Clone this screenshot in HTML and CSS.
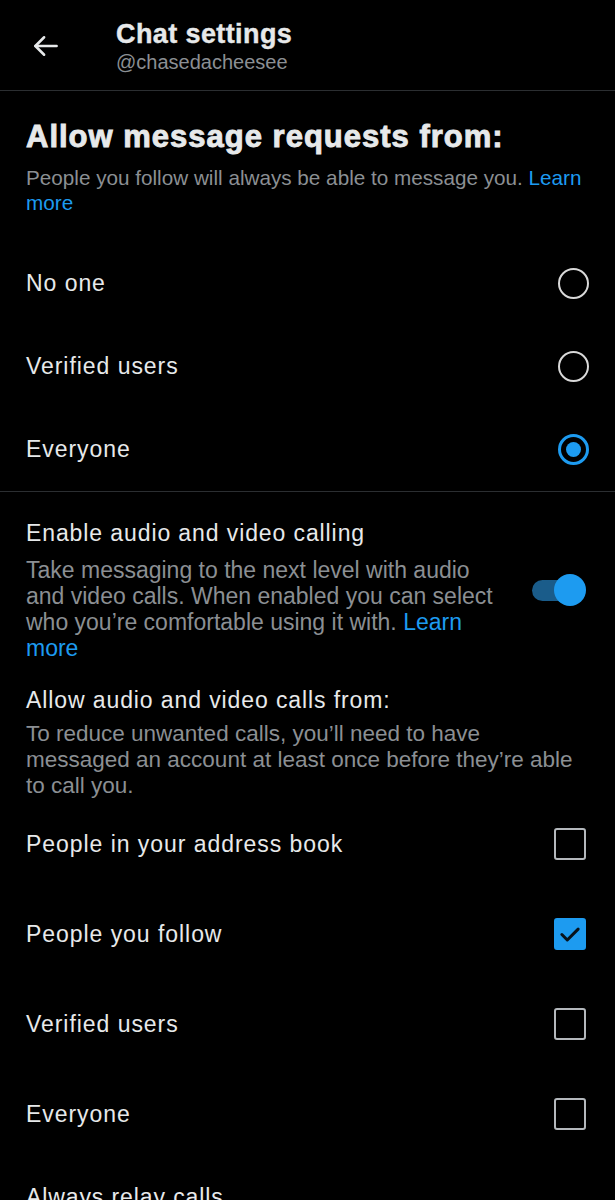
FILE: index.html
```html
<!DOCTYPE html>
<html lang="en">
<head>
<meta charset="utf-8">
<title>Chat settings</title>
<link rel="stylesheet" href="styles.css">
</head>
<body>
<header class="topbar">
  <div class="back">
    <svg width="30" height="30" viewBox="0 0 24 24" fill="none" stroke="#e7e9ea" stroke-width="2" stroke-linecap="round" stroke-linejoin="round"><path d="M20.5 12H3.5"/><path d="M10.5 5l-7 7 7 7"/></svg>
  </div>
  <div class="titles">
    <div class="title">Chat settings</div>
    <div class="handle">@chasedacheesee</div>
  </div>
</header>

<section class="section">
  <h1 class="heading">Allow message requests from:</h1>
  <p class="desc small">People you follow will always be able to message you. <a class="link">Learn more</a></p>
  <div class="options radios">
    <div class="row radio-row"><span class="label">No one</span><span class="radio"></span></div>
    <div class="row radio-row"><span class="label">Verified users</span><span class="radio"></span></div>
    <div class="row radio-row"><span class="label">Everyone</span><span class="radio checked"></span></div>
  </div>
</section>

<section class="section bordered">
  <div class="toggle-row">
    <div class="toggle-text">
      <div class="subheading">Enable audio and video calling</div>
      <p class="desc">Take messaging to the next level with audio and video calls. When enabled you can select who you’re comfortable using it with. <a class="link">Learn more</a></p>
    </div>
    <div class="switch"><span class="track"></span><span class="thumb"></span></div>
  </div>

  <div class="subheading second">Allow audio and video calls from:</div>
  <p class="desc tight">To reduce unwanted calls, you’ll need to have messaged an account at least once before they’re able to call you.</p>
  <div class="options checks">
    <div class="row check-row"><span class="label">People in your address book</span><span class="box"></span></div>
    <div class="row check-row"><span class="label">People you follow</span><span class="box checked"><svg width="26" height="26" viewBox="0 0 24 24" fill="none" stroke="#08131c" stroke-width="2.8" stroke-linecap="round" stroke-linejoin="round"><path d="M4.5 12.5l5 5 10-10"/></svg></span></div>
    <div class="row check-row"><span class="label">Verified users</span><span class="box"></span></div>
    <div class="row check-row"><span class="label">Everyone</span><span class="box"></span></div>
  </div>
  <div class="subheading relay">Always relay calls</div>
</section>
</body>
</html>
```

FILE: styles.css
```css
html, body {
  margin: 0;
  padding: 0;
  background: #000;
}
body {
  font-family: "Liberation Sans", Arial, sans-serif;
  color: #e7e9ea;
  width: 615px;
  height: 1200px;
  overflow: hidden;
}
.topbar {
  display: flex;
  align-items: center;
  height: 90px;
  border-bottom: 1px solid #2b2e31;
}
.back {
  width: 116px;
  display: flex;
  align-items: center;
  padding-left: 31px;
  box-sizing: border-box;
  margin-top: 2px;
}
.titles {
  display: flex;
  flex-direction: column;
  margin-top: 4px;
}
.title {
  font-size: 27px;
  font-weight: 700;
  line-height: 30px;
  letter-spacing: 0.4px;
  -webkit-text-stroke: 0.4px #e7e9ea;
  margin-top: -2px;
}
.handle {
  font-size: 20px;
  color: #8b8f93;
  line-height: 24px;
  margin-top: 1px;
}
.section {
  padding: 0 26px;
}
.bordered {
  border-top: 1px solid #2b2e31;
}
.heading {
  margin: 28px 0 0;
  font-size: 31px;
  font-weight: 700;
  line-height: 36px;
  letter-spacing: 1px;
  -webkit-text-stroke: 0.9px #e7e9ea;
}
.desc {
  margin: 10px 0 0;
  font-size: 23px;
  line-height: 26px;
  color: #8b8f93;
}
.desc.small {
  font-size: 20.7px;
  line-height: 25px;
}
.desc.tight {
  margin-top: 7px;
  font-size: 22.5px;
}
.link {
  color: #1d9bf0;
}
.options {
  display: flex;
  flex-direction: column;
}
.options.radios {
  margin-top: 27px;
}
.row {
  display: flex;
  align-items: center;
  justify-content: space-between;
  font-size: 23px;
  letter-spacing: 0.95px;
}
.radio-row {
  height: 83px;
}
.check-row {
  height: 90px;
}
.radio {
  width: 27px;
  height: 27px;
  border: 2px solid #d9d9d9;
  border-radius: 50%;
}
.radio.checked {
  border: 3px solid #1d9bf0;
  width: 25px;
  height: 25px;
  display: flex;
  align-items: center;
  justify-content: center;
}
.radio.checked::after {
  content: "";
  width: 15px;
  height: 15px;
  border-radius: 50%;
  background: #1d9bf0;
}
.toggle-row {
  display: flex;
  align-items: center;
  justify-content: space-between;
  margin-top: 27px;
}
.toggle-text {
  width: 477px;
}
.subheading {
  font-size: 23px;
  line-height: 28px;
  letter-spacing: 0.9px;
}
.subheading.second {
  margin-top: 25px;
}
.subheading.relay {
  margin-top: 24px;
}
.switch {
  position: relative;
  width: 54px;
  height: 32px;
  margin-right: 3px;
  display: flex;
  align-items: center;
}
.track {
  width: 40px;
  height: 21px;
  border-radius: 11px;
  background: #1a5c8a;
}
.thumb {
  position: absolute;
  right: 0;
  top: 0;
  width: 32px;
  height: 32px;
  border-radius: 50%;
  background: #1d9bf0;
}
.box {
  width: 28px;
  height: 28px;
  border: 2px solid #b4b8bc;
  border-radius: 3px;
  margin-right: 3px;
  display: flex;
  align-items: center;
  justify-content: center;
}
.box.checked {
  background: #1d9bf0;
  border-color: #1d9bf0;
}
```
